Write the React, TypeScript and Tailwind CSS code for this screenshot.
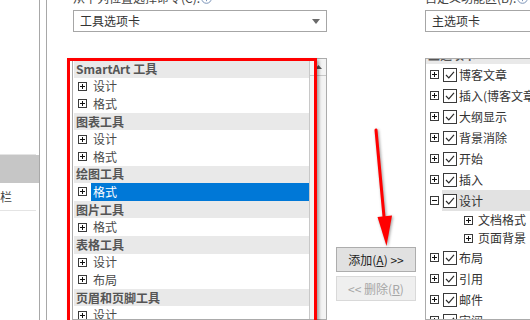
import React from 'react';

type LeftRow = { head?: string; child?: string; selected?: boolean };

const leftRows: LeftRow[] = [
    { head: 'SmartArt 工具' },
    { child: '设计' },
    { child: '格式' },
    { head: '图表工具' },
    { child: '设计' },
    { child: '格式' },
    { head: '绘图工具' },
    { child: '格式', selected: true },
    { head: '图片工具' },
    { child: '格式' },
    { head: '表格工具' },
    { child: '设计' },
    { child: '布局' },
    { head: '页眉和页脚工具' },
    { child: '设计' },
];

type RightRow = { label: string; sub?: boolean; open?: boolean; selected?: boolean };

const rightRows: RightRow[] = [
    { label: '博客文章' },
    { label: '插入(博客文章)' },
    { label: '大纲显示' },
    { label: '背景消除' },
    { label: '开始' },
    { label: '插入' },
    { label: '设计', open: true, selected: true },
    { label: '文档格式', sub: true },
    { label: '页面背景', sub: true },
    { label: '布局' },
    { label: '引用' },
    { label: '邮件' },
    { label: '审阅' },
];

const ExpandBox = ({ open = false }: { open?: boolean }) => (
    <svg width="9" height="9" viewBox="0 0 9 9" className="shrink-0">
        <rect x="0.5" y="0.5" width="8" height="8" fill="white" stroke="#3a3a3a" />
        <line x1="2" y1="4.5" x2="7" y2="4.5" stroke="#111" />
        {!open && <line x1="4.5" y1="2" x2="4.5" y2="7" stroke="#111" />}
    </svg>
);

const CheckBox = () => (
    <svg width="14" height="14" viewBox="0 0 14 14" className="shrink-0">
        <rect x="0.5" y="0.5" width="13" height="13" fill="white" stroke="#3a3a3a" />
        <polyline points="3,7 5.8,9.8 11,3.8" fill="none" stroke="#2a2a2a" strokeWidth="1.2" />
    </svg>
);

const InfoIcon = () => (
    <svg width="11" height="11" viewBox="0 0 11 11" className="inline-block ml-[1px]">
        <circle cx="5.5" cy="5.5" r="4.8" fill="none" stroke="#7a93b8" />
        <line x1="5.5" y1="4.6" x2="5.5" y2="8.2" stroke="#7a93b8" />
        <circle cx="5.5" cy="3" r="0.7" fill="#7a93b8" />
    </svg>
);

const Dropdown = ({ text, arrow }: { text: string; arrow?: boolean }) => (
    <div className="h-[22px] border border-[#a6a6a6] flex items-center pl-[6px] pr-[6px] text-[12px] text-[#333]">
        <span className="flex-1">{text}</span>
        {arrow && (
            <svg width="8" height="5" viewBox="0 0 8 5">
                <polygon points="0,0 8,0 4,5" fill="#6a6a6a" />
            </svg>
        )}
    </div>
);

export default function App() {
    return (
        <div className="relative w-[530px] h-[320px] overflow-hidden bg-white flex font-['Noto_Sans_CJK_SC',sans-serif]">
            {/* left nav (mostly cut off) */}
            <div className="w-[40px] h-full border-r border-[#a8a8a8] shrink-0 flex flex-col overflow-hidden">
                <div className="h-[154px]" />
                <div className="h-px w-[36px] bg-[#e4e4e4]" />
                <div className="h-[28px] bg-[#c6c6c6]" />
                <div className="h-[27px] flex items-center whitespace-nowrap text-[12px] text-[#444] -ml-[72px]">快速访问工具栏</div>
                <div className="h-px w-[36px] bg-[#e4e4e4]" />
            </div>
            <div className="w-[7px] h-full border-r border-[#a8a8a8] shrink-0" />

            {/* left column */}
            <div className="ml-[26px] w-[254px] shrink-0 flex flex-col">
                <div className="-mt-[14px] h-[24px] flex items-center text-[12px] text-[#444] whitespace-nowrap">
                    从下列位置选择命令(C):<InfoIcon />
                </div>
                <Dropdown text="工具选项卡" arrow />
                <div className="mt-[26px] -ml-px flex-1 border border-[#ababab] flex overflow-hidden">
                    <div className="flex-1 pl-px pt-px">
                        {leftRows.map((r, i) =>
                            r.head ? (
                                <div key={i} className="h-[17.6px] bg-[#e9e9e9] flex items-center pl-[2px] text-[12px] font-semibold text-[#555] whitespace-nowrap">
                                    {r.head}
                                </div>
                            ) : (
                                <div key={i} className="h-[17.6px] flex items-center pl-[4px] text-[12px] text-[#4a4a4a]">
                                    <ExpandBox />
                                    <span className={r.selected ? 'ml-[4px] pl-[2px] flex-1 h-full flex items-center bg-[#0078d7] text-white' : 'ml-[6px]'}>
                                        {r.child}
                                    </span>
                                </div>
                            )
                        )}
                    </div>
                    <div className="w-[17px] border-l border-[#c8c8c8] bg-[#f4f4f4] flex flex-col">
                        <div className="h-[17px] border-b border-[#c8c8c8] flex items-center justify-center">
                            <svg width="7" height="4" viewBox="0 0 7 4">
                                <polygon points="0,4 7,4 3.5,0" fill="#555" />
                            </svg>
                        </div>
                    </div>
                </div>
            </div>

            {/* middle buttons */}
            <div className="w-[98px] shrink-0 flex flex-col items-center pt-[247px] gap-[4px]">
                <button className="w-[80px] h-[25px] bg-[#e1e1e1] border border-[#adadad] text-[12px] text-[#222] whitespace-nowrap">
                    添加(<span className="underline">A</span>) &gt;&gt;
                </button>
                <button className="w-[80px] h-[25px] bg-[#efefef] border border-[#d9d9d9] text-[12px] text-[#a6a6a6] whitespace-nowrap">
                    &lt;&lt; 删除(<span className="underline">R</span>)
                </button>
            </div>

            {/* right column */}
            <div className="w-[160px] shrink-0 flex flex-col">
                <div className="-mt-[14px] h-[24px] flex items-center text-[12px] text-[#444] whitespace-nowrap">
                    自定义功能区(B):<InfoIcon />
                </div>
                <Dropdown text="主选项卡" />
                <div className="mt-[26px] flex-1 border border-[#ababab] overflow-hidden">
                    <div className="-mt-[13px]">
                        <div className="h-[18px] bg-[#e9e9e9] flex items-center pl-[2px] text-[12px] font-semibold text-[#555]">主选项卡</div>
                        {rightRows.map((r, i) =>
                            r.sub ? (
                                <div key={i} className="h-[18px] flex items-center pl-[38px] text-[12px] text-[#333] whitespace-nowrap">
                                    <ExpandBox />
                                    <span className="ml-[5px]">{r.label}</span>
                                </div>
                            ) : (
                                <div key={i} className="h-[21px] flex items-center pl-[4px] text-[12px] text-[#333] whitespace-nowrap">
                                    <ExpandBox open={r.open} />
                                    <div className={r.selected ? 'ml-[3px] pl-[1px] flex-1 h-full flex items-center bg-[#e2e2e2]' : 'ml-[4px] flex items-center'}>
                                        <CheckBox />
                                        <span className="ml-[2px]">{r.label}</span>
                                    </div>
                                </div>
                            )
                        )}
                    </div>
                </div>
            </div>

            {/* red annotation box */}
            <div className="absolute left-[67px] top-[58px] w-[250px] h-[290px] border-[3px] border-[#ff0000] shadow-[2px_2px_3px_rgba(0,0,0,0.35)]" />

            {/* red annotation arrow */}
            <svg className="absolute left-0 top-0 pointer-events-none" width="530" height="320" style={{ filter: 'drop-shadow(1px 1px 1.5px rgba(0,0,0,0.4))' }}>
                <line x1="376" y1="130" x2="384.5" y2="222" stroke="#ff0000" strokeWidth="3" strokeLinecap="round" />
                <polygon points="377.5,217 392,215.5 386.5,246" fill="#ff0000" />
            </svg>
        </div>
    );
}
